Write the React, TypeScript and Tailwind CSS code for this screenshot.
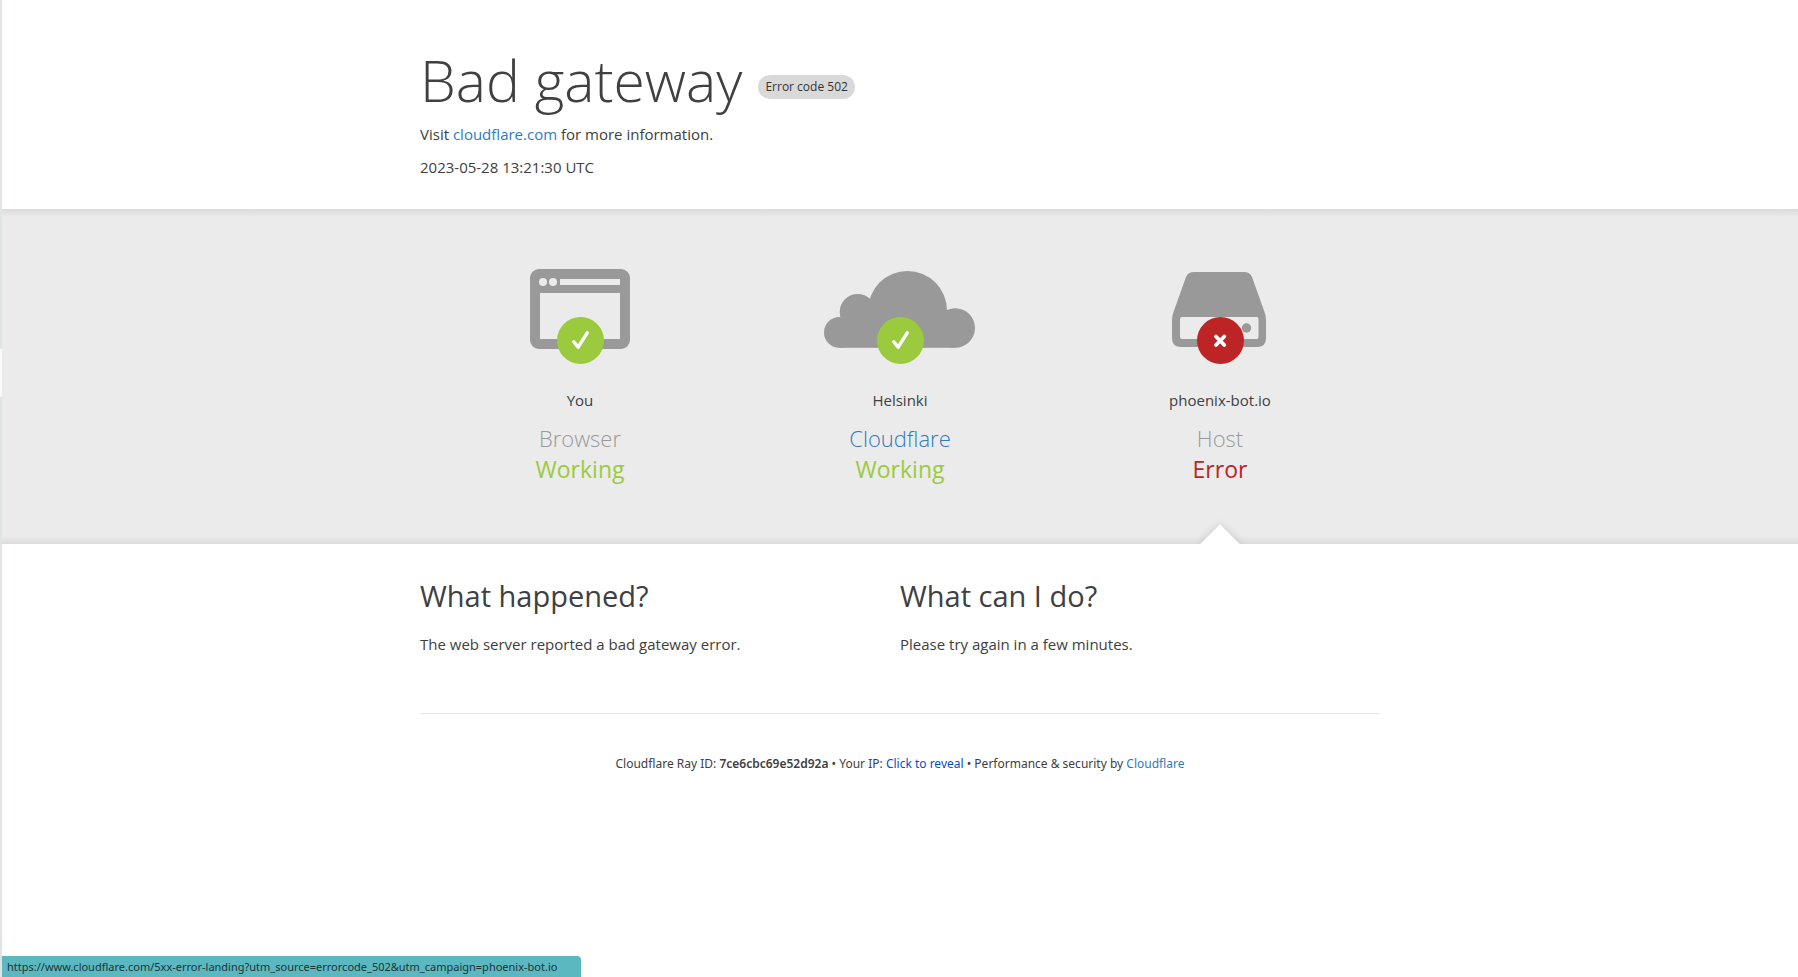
import type { ReactNode } from "react";
import clsx from "clsx";

const LANDING_URL =
  "https://www.cloudflare.com/5xx-error-landing?utm_source=errorcode_502&utm_campaign=phoenix-bot.io";

function BrowserIcon() {
  return (
    <svg width="100" height="80" viewBox="0 0 100 80" aria-hidden="true">
      <rect width="100" height="80" rx="9" fill="#999" />
      <circle cx="13" cy="13" r="4" fill="#ebebeb" />
      <circle cx="23" cy="13" r="4" fill="#ebebeb" />
      <rect x="30" y="10" width="60" height="6" fill="#ebebeb" />
      <rect x="10" y="24" width="80" height="46" fill="#ebebeb" />
    </svg>
  );
}

function CloudIcon() {
  return (
    <svg width="152" height="77" viewBox="0 0 152 77" fill="#999" aria-hidden="true">
      <circle cx="15.4" cy="61.4" r="15.4" />
      <circle cx="33.7" cy="41" r="18" />
      <circle cx="83.5" cy="39.5" r="39.5" />
      <circle cx="131.2" cy="57" r="19.8" />
      <rect x="15.4" y="57" width="116" height="19.8" />
      <rect x="33" y="41" width="50" height="20" />
    </svg>
  );
}

function HostIcon() {
  return (
    <svg width="96" height="75" viewBox="0 0 96 75" aria-hidden="true">
      <path
        d="M22 0H72C76 0 78.500 1.500 80 5L92.500 40Q94 44 94 48V66Q94 75 85 75H9Q0 75 0 66V48Q0 44 1.500 40L14 5C15.500 1.500 18 0 22 0Z"
        fill="#999"
      />
      <rect x="8" y="45" width="78.500" height="22" rx="2" fill="#ebebeb" />
      <circle cx="74.500" cy="56" r="4.700" fill="#999" />
    </svg>
  );
}

function StatusBadge({ ok }: { ok: boolean }) {
  return (
    <svg
      width="48"
      height="47"
      viewBox="-1 0 48 47"
      className="absolute top-12 left-1/2 -translate-x-1/2"
      fill="none"
      stroke="#fff"
      strokeLinecap="round"
      aria-hidden="true"
    >
      <circle cx="23.5" cy="23.5" r="23.5" fill={ok ? "#9bca3e" : "#bd2426"} stroke="none" />
      {ok ? (
        <path d="M16.800 24.800L21.200 30.200L30.200 15.800" strokeWidth="3.400" strokeLinejoin="round" />
      ) : (
        <path d="M19 19.500L27.300 28M27.300 19.500L19 28" strokeWidth="3.800" />
      )}
    </svg>
  );
}

function StatusColumn({
  icon,
  location,
  name,
  ok = true,
  pointed,
}: {
  icon: ReactNode;
  location: string;
  name: ReactNode;
  ok?: boolean;
  /** Draws the notch that ties this column to the explanation below. */
  pointed?: boolean;
}) {
  return (
    <div className="relative overflow-hidden pt-15 pb-[59px] text-center">
      <div className="relative mb-[39px] flex h-20 items-center justify-center">
        {icon}
        <StatusBadge ok={ok} />
      </div>
      <p>{location}</p>
      <h3 className="mt-[11px] text-[22px] leading-[31px] font-light text-[#999]">{name}</h3>
      <p
        className={clsx(
          "text-[23px] leading-[31px]",
          ok ? "text-[#9bca3e]" : "text-[#bd2426]",
        )}
      >
        {ok ? "Working" : "Error"}
      </p>
      {pointed && (
        <span className="absolute -bottom-[14px] left-1/2 size-7 -translate-x-1/2 rotate-45 bg-white shadow-[0_0_8px_rgba(0,0,0,0.15)]" />
      )}
    </div>
  );
}

export default function App() {
  return (
    <div className="flex min-h-screen bg-white font-['Open_Sans',sans-serif] text-[15px] leading-6 text-[#404040]">
      {/* window edge */}
      <div className="flex w-[2px] shrink-0 flex-col bg-[#dfe3e3]">
        <div className="mt-[349px] h-12 bg-[#f8fafa]" />
      </div>

      <div className="min-w-0 flex-1">
        <header className="mx-auto max-w-[960px] pt-11 pb-[30px]">
          <h1 className="mb-[6px] flex items-center gap-4">
            <span className="text-[57px] leading-[72px] font-light">Bad gateway</span>
            <span className="mt-[14px] rounded-full bg-[#d9d9d9] px-[7px] text-[12px] font-medium text-[#333]">
              Error code 502
            </span>
          </h1>
          <p>
            Visit{" "}
            <a href={LANDING_URL} className="text-[#2f7bbf]">
              cloudflare.com
            </a>{" "}
            for more information.
          </p>
          <p className="mt-[9px]">2023-05-28 13:21:30 UTC</p>
        </header>

        <section className="bg-[#ebebeb] bg-[linear-gradient(to_bottom,#dadada,#ebebeb_8px,#ebebeb_calc(100%-8px),#dcdcdc)]">
          <div className="mx-auto grid max-w-[960px] grid-cols-3">
            <StatusColumn icon={<BrowserIcon />} location="You" name="Browser" />
            <StatusColumn
              icon={<CloudIcon />}
              location="Helsinki"
              name={
                <a href={LANDING_URL} className="text-[#2f7bbf]">
                  Cloudflare
                </a>
              }
            />
            <StatusColumn
              icon={<HostIcon />}
              location="phoenix-bot.io"
              name="Host"
              ok={false}
              pointed
            />
          </div>
        </section>

        <main className="mx-auto max-w-[960px]">
          <div className="grid grid-cols-2 pt-8 pb-[57px]">
            <section>
              <h2 className="mb-4 text-[29px] leading-10">What happened?</h2>
              <p>The web server reported a bad gateway error.</p>
            </section>
            <section>
              <h2 className="mb-4 text-[29px] leading-10">What can I do?</h2>
              <p>Please try again in a few minutes.</p>
            </section>
          </div>

          <footer className="border-t border-[#e5e5e5] pt-10 text-center font-['Noto_Sans',sans-serif] text-[12px] leading-5">
            Cloudflare Ray ID: <strong className="font-semibold">7ce6cbc69e52d92a</strong>
            {" • "}Your IP:{" "}
            <button type="button" className="text-[#0051c3]">
              Click to reveal
            </button>
            {" • "}Performance &amp; security by{" "}
            <a href={LANDING_URL} className="text-[#2f7bbf]">
              Cloudflare
            </a>
          </footer>
        </main>
      </div>

      {/* link preview bubble */}
      <div className="fixed bottom-0 left-[2px] min-w-[579px] rounded-tr-sm bg-[#5cb8c0] px-[5px] font-['Noto_Sans',sans-serif] text-[11px] leading-[21px] text-[#1d3338]">
        {LANDING_URL}
      </div>
    </div>
  );
}
